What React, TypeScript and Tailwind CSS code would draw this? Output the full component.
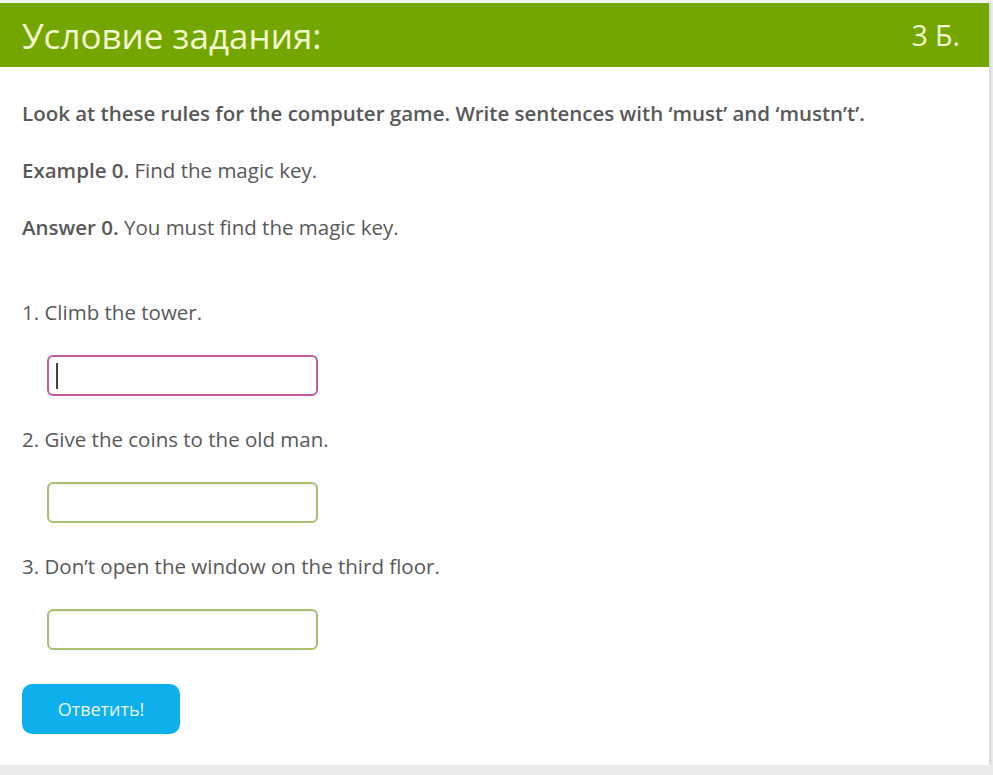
export default function App() {
  const font = { fontFamily: '"Open Sans", "Noto Sans", sans-serif' };
  return (
    <div className="min-h-[775px] w-[993px] bg-[#ebebeb]" style={font}>
      <div className="h-[3px] bg-[#f2f2f2]" />
      <div className="w-[991px] border-r-2 border-[#dadada] bg-white pb-[31px]">
        <div className="flex h-[64px] items-center justify-between bg-[#74a600] pl-[22px] pr-[29px] text-[#f2f9cf]">
          <h1 className="text-[35px] leading-none">Условие задания:</h1>
          <span className="text-[28.5px] leading-none">3 Б.</span>
        </div>
        <div className="pl-[22px] text-[20.5px] leading-[27px] text-[#585858]">
          <p className="mt-[33px] font-semibold">
            Look at these rules for the computer game. Write sentences with ‘must’ and ‘mustn’t’.
          </p>
          <p className="mt-[30px]">
            <span className="font-semibold">Example 0.</span> Find the magic key.
          </p>
          <p className="mt-[30px]">
            <span className="font-semibold">Answer 0.</span> You must find the magic key.
          </p>
          <p className="mt-[58px]">1. Climb the tower.</p>
          <div className="ml-[25px] mt-[29px] flex h-[41px] w-[271px] items-center rounded-[6px] border-2 border-[#c45aa0] bg-white pl-[7px]">
            <span className="h-[26px] w-[2px] bg-[#444]" />
          </div>
          <p className="mt-[30px]">2. Give the coins to the old man.</p>
          <div className="ml-[25px] mt-[29px] h-[41px] w-[271px] rounded-[6px] border-2 border-[#a8c070] bg-white shadow-[inset_0_1px_3px_rgba(0,0,0,0.08)]" />
          <p className="mt-[30px]">3. Don’t open the window on the third floor.</p>
          <div className="ml-[25px] mt-[29px] h-[41px] w-[271px] rounded-[6px] border-2 border-[#a8c070] bg-white shadow-[inset_0_1px_3px_rgba(0,0,0,0.08)]" />
          <button className="mt-[34px] flex h-[50px] w-[158px] items-center justify-center rounded-[10px] bg-[#0db0ec] text-[18px] text-[#eaf8ff]">
            Ответить!
          </button>
        </div>
      </div>
    </div>
  );
}
